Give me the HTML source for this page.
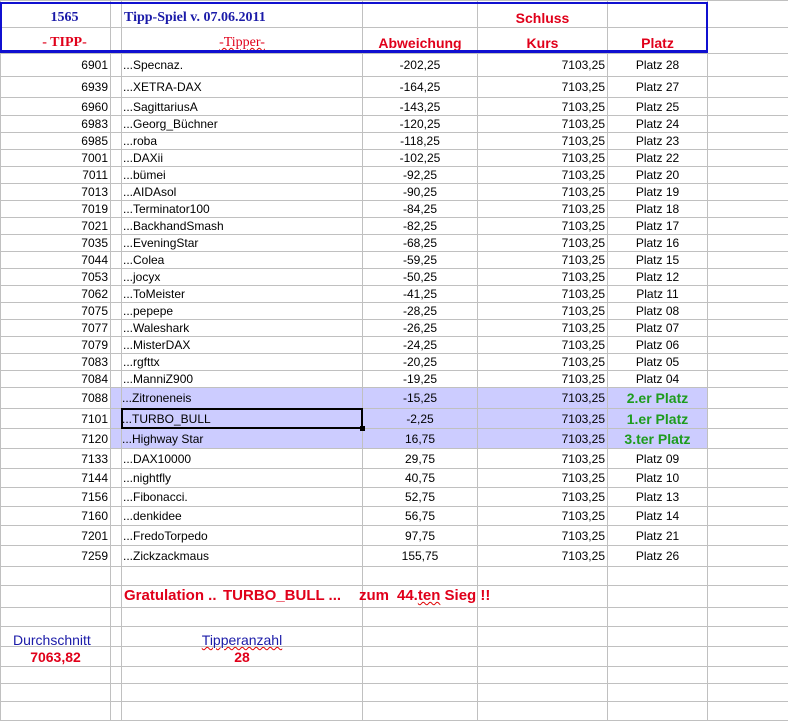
<!DOCTYPE html>
<html><head><meta charset="utf-8"><style>
body{margin:0;width:788px;height:720px;overflow:hidden;background:#fff;position:relative;font-family:"Liberation Sans",Arial,sans-serif;}
table{border-collapse:collapse;table-layout:fixed;position:absolute;left:0;top:0;width:788px;}
td{border:1px solid #c0c0c0;padding:0 2px;font-size:12px;white-space:nowrap;overflow:visible;line-height:12px;color:#000;}
td.n{padding-left:1px}
.r{text-align:right}.c{text-align:center}
.hl td.h{background:#ccccff}
.g{color:#1e9c1e;font-weight:bold;font-size:14px}
.red{color:#e0001a;font-weight:bold;font-size:14px}
.ser{font-family:"Liberation Serif",serif;font-weight:bold;font-size:14px;color:#1a1aa8}
.sq{text-decoration:underline wavy #e00000;text-decoration-thickness:1px}
.hd td{vertical-align:bottom;padding-bottom:3px}
.gr{position:absolute;top:588px;color:#e0001a;font-weight:bold;font-size:15px;white-space:nowrap;line-height:16px}
</style></head><body>
<table>
<colgroup><col style="width:110px"><col style="width:11px"><col style="width:241px"><col style="width:115px"><col style="width:130px"><col style="width:100px"><col style="width:81px"></colgroup>
<tr class="hd" style="height:27px"><td class="c ser" style="padding-left:20px">1565</td><td></td><td class="ser" style="padding-left:2px">Tipp-Spiel v. 07.06.2011</td><td></td><td class="c red">Schluss</td><td></td><td></td></tr>
<tr class="hd" style="height:26px"><td class="c" style="font-family:'Liberation Serif',serif;color:#e0001a;font-weight:bold;font-size:14px;padding-left:20px;padding-bottom:4px">- TIPP-</td><td></td><td class="c" style="font-family:'Liberation Serif',serif;color:#e0001a;font-size:14px;padding-bottom:4px"><span class="sq">-Tipper-</span></td><td class="c red" style="padding-bottom:4px">Abweichung</td><td class="c red" style="padding-bottom:4px">Kurs</td><td class="c red" style="padding-bottom:4px">Platz</td><td></td></tr>
<tr style="height:23px"><td class="r">6901</td><td></td><td class="n">...Specnaz.</td><td class="c">-202,25</td><td class="r">7103,25</td><td class="c">Platz 28</td><td></td></tr>
<tr style="height:21px"><td class="r">6939</td><td></td><td class="n">...XETRA-DAX</td><td class="c">-164,25</td><td class="r">7103,25</td><td class="c">Platz 27</td><td></td></tr>
<tr style="height:18px"><td class="r">6960</td><td></td><td class="n">...SagittariusA</td><td class="c">-143,25</td><td class="r">7103,25</td><td class="c">Platz 25</td><td></td></tr>
<tr style="height:17px"><td class="r">6983</td><td></td><td class="n">...Georg_Büchner</td><td class="c">-120,25</td><td class="r">7103,25</td><td class="c">Platz 24</td><td></td></tr>
<tr style="height:17px"><td class="r">6985</td><td></td><td class="n">...roba</td><td class="c">-118,25</td><td class="r">7103,25</td><td class="c">Platz 23</td><td></td></tr>
<tr style="height:17px"><td class="r">7001</td><td></td><td class="n">...DAXii</td><td class="c">-102,25</td><td class="r">7103,25</td><td class="c">Platz 22</td><td></td></tr>
<tr style="height:17px"><td class="r">7011</td><td></td><td class="n">...bümei</td><td class="c">-92,25</td><td class="r">7103,25</td><td class="c">Platz 20</td><td></td></tr>
<tr style="height:17px"><td class="r">7013</td><td></td><td class="n">...AIDAsol</td><td class="c">-90,25</td><td class="r">7103,25</td><td class="c">Platz 19</td><td></td></tr>
<tr style="height:17px"><td class="r">7019</td><td></td><td class="n">...Terminator100</td><td class="c">-84,25</td><td class="r">7103,25</td><td class="c">Platz 18</td><td></td></tr>
<tr style="height:17px"><td class="r">7021</td><td></td><td class="n">...BackhandSmash</td><td class="c">-82,25</td><td class="r">7103,25</td><td class="c">Platz 17</td><td></td></tr>
<tr style="height:17px"><td class="r">7035</td><td></td><td class="n">...EveningStar</td><td class="c">-68,25</td><td class="r">7103,25</td><td class="c">Platz 16</td><td></td></tr>
<tr style="height:17px"><td class="r">7044</td><td></td><td class="n">...Colea</td><td class="c">-59,25</td><td class="r">7103,25</td><td class="c">Platz 15</td><td></td></tr>
<tr style="height:17px"><td class="r">7053</td><td></td><td class="n">...jocyx</td><td class="c">-50,25</td><td class="r">7103,25</td><td class="c">Platz 12</td><td></td></tr>
<tr style="height:17px"><td class="r">7062</td><td></td><td class="n">...ToMeister</td><td class="c">-41,25</td><td class="r">7103,25</td><td class="c">Platz 11</td><td></td></tr>
<tr style="height:17px"><td class="r">7075</td><td></td><td class="n">...pepepe</td><td class="c">-28,25</td><td class="r">7103,25</td><td class="c">Platz 08</td><td></td></tr>
<tr style="height:17px"><td class="r">7077</td><td></td><td class="n">...Waleshark</td><td class="c">-26,25</td><td class="r">7103,25</td><td class="c">Platz 07</td><td></td></tr>
<tr style="height:17px"><td class="r">7079</td><td></td><td class="n">...MisterDAX</td><td class="c">-24,25</td><td class="r">7103,25</td><td class="c">Platz 06</td><td></td></tr>
<tr style="height:17px"><td class="r">7083</td><td></td><td class="n">...rgfttx</td><td class="c">-20,25</td><td class="r">7103,25</td><td class="c">Platz 05</td><td></td></tr>
<tr style="height:17px"><td class="r">7084</td><td></td><td class="n">...ManniZ900</td><td class="c">-19,25</td><td class="r">7103,25</td><td class="c">Platz 04</td><td></td></tr>
<tr class="hl" style="height:21px"><td class="r">7088</td><td class="h"></td><td class="h n" style="padding-left:0">...Zitroneneis</td><td class="h c">-15,25</td><td class="h r">7103,25</td><td class="h c g">2.er Platz</td><td></td></tr>
<tr class="hl" style="height:20px"><td class="r">7101</td><td class="h"></td><td class="h n" style="padding-left:0">...TURBO_BULL</td><td class="h c">-2,25</td><td class="h r">7103,25</td><td class="h c g">1.er Platz</td><td></td></tr>
<tr class="hl" style="height:20px"><td class="r">7120</td><td class="h"></td><td class="h n" style="padding-left:0">...Highway Star</td><td class="h c">16,75</td><td class="h r">7103,25</td><td class="h c g">3.ter Platz</td><td></td></tr>
<tr style="height:20px"><td class="r">7133</td><td></td><td class="n">...DAX10000</td><td class="c">29,75</td><td class="r">7103,25</td><td class="c">Platz 09</td><td></td></tr>
<tr style="height:19px"><td class="r">7144</td><td></td><td class="n">...nightfly</td><td class="c">40,75</td><td class="r">7103,25</td><td class="c">Platz 10</td><td></td></tr>
<tr style="height:19px"><td class="r">7156</td><td></td><td class="n">...Fibonacci.</td><td class="c">52,75</td><td class="r">7103,25</td><td class="c">Platz 13</td><td></td></tr>
<tr style="height:19px"><td class="r">7160</td><td></td><td class="n">...denkidee</td><td class="c">56,75</td><td class="r">7103,25</td><td class="c">Platz 14</td><td></td></tr>
<tr style="height:20px"><td class="r">7201</td><td></td><td class="n">...FredoTorpedo</td><td class="c">97,75</td><td class="r">7103,25</td><td class="c">Platz 21</td><td></td></tr>
<tr style="height:21px"><td class="r">7259</td><td></td><td class="n">...Zickzackmaus</td><td class="c">155,75</td><td class="r">7103,25</td><td class="c">Platz 26</td><td></td></tr>
<tr style="height:19px"><td></td><td></td><td></td><td></td><td></td><td></td><td></td></tr>
<tr style="height:22px"><td></td><td></td><td></td><td></td><td></td><td></td><td></td></tr>
<tr style="height:19px"><td></td><td></td><td></td><td></td><td></td><td></td><td></td></tr>
<tr style="height:20px"><td style="color:#1a1aa8;font-size:14px;padding-left:12px;vertical-align:bottom">Durchschnitt</td><td></td><td class="c" style="color:#1a1aa8;font-size:14px;vertical-align:bottom"><span class="sq">Tipperanzahl</span></td><td></td><td></td><td></td><td></td></tr>
<tr style="height:20px"><td class="c red" style="border-top:1px solid #000">7063,82</td><td style="border-top:1px solid #000"></td><td class="c red" style="border-top:1px solid #000">28</td><td></td><td></td><td></td><td></td></tr>
<tr style="height:17px"><td></td><td></td><td></td><td></td><td></td><td></td><td></td></tr>
<tr style="height:18px"><td></td><td></td><td></td><td></td><td></td><td></td><td></td></tr>
<tr style="height:19px"><td></td><td></td><td></td><td></td><td></td><td></td><td></td></tr>
</table>
<div class="gr" style="left:124px">Gratulation ..</div>
<div class="gr" style="left:223px">TURBO_BULL ...</div>
<div class="gr" style="left:359px">zum</div>
<div class="gr" style="left:397px">44.<span class="sq">ten</span> Sieg !!</div>
<div style="position:absolute;left:0;top:2px;width:707px;height:2px;background:#1010d0"></div>
<div style="position:absolute;left:0;top:2px;width:2px;height:51px;background:#1010d0"></div>
<div style="position:absolute;left:706px;top:2px;width:2px;height:51px;background:#1010d0"></div>
<div style="position:absolute;left:0;top:50px;width:708px;height:3px;background:#1010d0"></div>
<div style="position:absolute;left:121px;top:408px;width:238px;height:17px;border:2px solid #000"></div>
<div style="position:absolute;left:360px;top:426px;width:5px;height:5px;background:#000"></div>
</body></html>
